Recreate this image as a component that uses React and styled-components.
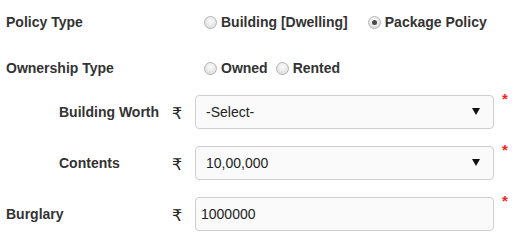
import React from 'react';
import styled, { createGlobalStyle } from 'styled-components';

const GlobalStyle = createGlobalStyle`
  body {
    margin: 0;
    background: #fff;
    font-family: "Liberation Sans", Arial, Helvetica, sans-serif;
    color: #333;
  }
`;

const Form = styled.div`
  width: 520px;
  height: 242px;
  padding: 0 0 0 6px;
  box-sizing: border-box;
  display: grid;
  grid-template-columns: 160px 29px 299px 20px;
  grid-template-rows: 44px 42px 51px 51px 51px;
  align-items: center;
`;

const Label = styled.div`
  grid-column: ${p => (p.$wide ? '1 / span 2' : '1')};
  padding-left: ${p => (p.$indent ? '53px' : '0')};
  padding-top: ${p => p.$pt || 0}px;
  font-size: 14px;
  font-weight: bold;
  color: #333;
`;

const RadioGroup = styled.div`
  grid-column: 3 / span 2;
  display: flex;
  align-items: center;
  padding-left: 9px;
  padding-top: ${p => p.$pt || 0}px;
`;

const RadioItem = styled.label`
  display: flex;
  align-items: center;
  font-size: 14px;
  font-weight: bold;
  color: #333;
  margin-right: ${p => p.$gap}px;
`;

const RadioDot = styled.span`
  width: 11px;
  height: 11px;
  border-radius: 50%;
  border: 1px solid #b4b4b4;
  background: radial-gradient(circle at 50% 35%, #fbfbfb 0%, #e6e6e6 60%, #d4d4d4 100%);
  margin-right: 4px;
  position: relative;
  flex: none;
  &::after {
    content: '';
    display: ${p => (p.$checked ? 'block' : 'none')};
    position: absolute;
    left: 3px;
    top: 3px;
    width: 5px;
    height: 5px;
    border-radius: 50%;
    background: #4a4a4a;
  }
`;

const Rupee = styled.div`
  grid-column: 2;
  font-family: "DejaVu Sans", sans-serif;
  font-size: 16px;
  color: #222;
  padding-left: 6px;
  padding-top: 3px;
`;

const FieldWrap = styled.div`
  grid-column: 3;
`;

const Box = styled.div`
  width: 100%;
  height: 34px;
  box-sizing: border-box;
  border: 1px solid #cfcfcf;
  border-radius: 4px;
  background: #fafafa;
  display: flex;
  align-items: center;
  justify-content: space-between;
  padding: 0 13px 0 ${p => p.$pl}px;
  font-size: 14px;
  color: #222;
`;

const Arrow = styled.span`
  width: 0;
  height: 0;
  border-left: 4px solid transparent;
  border-right: 4px solid transparent;
  border-top: 7px solid #111;
`;

const Star = styled.div`
  grid-column: 4;
  align-self: start;
  color: #ff2020;
  font-size: 15px;
  font-weight: bold;
  padding-left: 8px;
  margin-top: 4px;
`;

export default function App() {
  return (
    <>
      <GlobalStyle />
      <Form>
        <Label $wide>Policy Type</Label>
        <RadioGroup>
          <RadioItem $gap={20}><RadioDot />Building [Dwelling]</RadioItem>
          <RadioItem $gap={0}><RadioDot $checked />Package Policy</RadioItem>
        </RadioGroup>

        <Label $wide $pt={6}>Ownership Type</Label>
        <RadioGroup $pt={6}>
          <RadioItem $gap={8}><RadioDot />Owned</RadioItem>
          <RadioItem $gap={0}><RadioDot />Rented</RadioItem>
        </RadioGroup>

        <Label $indent>Building Worth</Label>
        <Rupee>₹</Rupee>
        <FieldWrap>
          <Box $pl={10}>-Select-<Arrow /></Box>
        </FieldWrap>
        <Star>*</Star>

        <Label $indent>Contents</Label>
        <Rupee>₹</Rupee>
        <FieldWrap>
          <Box $pl={10}>10,00,000<Arrow /></Box>
        </FieldWrap>
        <Star>*</Star>

        <Label>Burglary</Label>
        <Rupee>₹</Rupee>
        <FieldWrap>
          <Box $pl={5}>1000000</Box>
        </FieldWrap>
        <Star>*</Star>
      </Form>
    </>
  );
}
